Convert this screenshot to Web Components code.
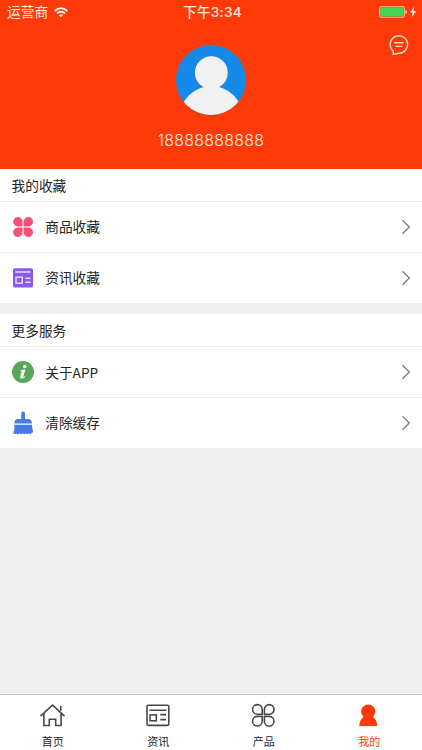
<!DOCTYPE html>
<html lang="zh-CN">
<head>
<meta charset="UTF-8">
<meta name="viewport" content="width=device-width, initial-scale=1">
<title>我的</title>
<style>
    html, body {
        height: 100%;
        margin: 0;
    }

    body {
        font-family: "Noto Sans CJK SC", Roboto, sans-serif;
        font-size: 13.7px;
        color: #262626;
        background-color: #f0f0f0;
        overflow: hidden;
    }
</style>
</head>
<body>
<profile-page></profile-page>

<script>
const icons = {
    goods: `<svg width="22" height="22" viewBox="0 0 22 22" fill="#fa5078">
        <path d="M10.5 10.5H5.8A4.7 4.7 0 1 1 10.5 5.8Z"/>
        <path d="M11.6 10.5V5.8A4.7 4.7 0 1 1 16.3 10.5Z"/>
        <path d="M10.5 11.6V16.2A4.7 4.7 0 1 1 5.8 11.6Z"/>
        <path d="M11.6 11.6H16.3A4.7 4.7 0 1 1 11.6 16.2Z"/>
    </svg>`,
    news: `<svg width="22" height="22" viewBox="0 0 22 22">
        <rect x="1" y="1.2" width="20" height="19.3" rx="1.5" fill="#8a5ae8"/>
        <path d="M3.4 5H18.6M13.4 11.3H18.5M13.4 15.3H18.5" stroke="#e8defc" stroke-width="1.4"/>
        <rect x="4" y="10.2" width="6.3" height="6" fill="none" stroke="#e8defc" stroke-width="1.4"/>
    </svg>`,
    about: `<svg width="22" height="22" viewBox="0 0 22 22">
        <circle cx="11" cy="11" r="11" fill="#55a958"/>
        <circle cx="12.7" cy="5.5" r="1.7" fill="#fff"/>
        <path d="M8.5 8.9L13.3 8.4L11.4 15.3Q11.1 16.4 13.2 15.1L13.5 15.5Q11.2 18 9.2 17.6Q7.7 17.2 8.3 15.3L9.6 10.5Q9.8 9.6 8.4 9.6Z" fill="#fff"/>
    </svg>`,
    clean: `<svg width="22" height="24" viewBox="0 0 22 24" fill="#477be3">
        <path d="M9.2 7.9V2Q9.2 .4 11.1 .4T13 2V7.9H17Q19.7 8.2 20 12.5H2.3Q2.8 8.2 5.4 7.9Z"/>
        <path d="M2.3 13.8H20Q20.3 19 21.1 20.8Q20.5 22.5 19 22.2Q18.2 24 16.4 22.2Q15.4 24 13.6 22.2Q12.4 24 10.7 22.2Q9.2 24 7.7 22.2Q6.4 24 4.8 22.7Q2.6 23.7 1.2 22.1Q3.3 18 2.3 13.8Z"/>
    </svg>`,
    home: `<svg width="26" height="26" viewBox="0.5 0 26 26" fill="none" stroke="#484848" stroke-width="1.6">
        <path d="M1 14.1L13 3.2L25 14.1M4.4 11.8V23.5H9.8V17.2H16.2V23.5H21.6V11.8M21.3 4V8.7"/>
    </svg>`,
    paper: `<svg width="26" height="26" viewBox="0 0 26 26" fill="none" stroke="#484848" stroke-width="1.6">
        <rect x="2" y="3.2" width="21.8" height="20.2" rx="1.3"/>
        <path d="M4.5 8.3H21.5M15.3 12.6H21M15.3 17.6H21"/>
        <rect x="5.1" y="12.9" width="6.2" height="5.9"/>
    </svg>`,
    product: `<svg width="26" height="26" viewBox="0.8 0 26 26" fill="none" stroke="#484848" stroke-width="1.6">
        <path d="M12 12.2H7.2A4.8 4.8 0 1 1 12 7.4Z"/>
        <path d="M14.2 12.2V7.4A4.8 4.8 0 1 1 19 12.2Z"/>
        <path d="M12 14.4V19.2A4.8 4.8 0 1 1 7.2 14.4Z"/>
        <path d="M14.2 14.4H19A4.8 4.8 0 1 1 14.2 19.2Z"/>
    </svg>`,
    mine: `<svg width="26" height="26" viewBox="1 0 26 26" fill="#fe3a08">
        <circle cx="13.2" cy="9.6" r="7.1"/>
        <path d="M9.7 14H16.7C20 15.8 22.1 19.5 22.2 24H4.2C4.3 19.5 6.4 15.8 9.7 14Z"/>
    </svg>`
};

class StatusBar extends HTMLElement {
    constructor() {
        super();
        this.shadowDOM = this.attachShadow({ mode: "open" });
    }

    connectedCallback() {
        this.shadowDOM.innerHTML = `
        <style>
            :host {
                display: grid;
                grid-template-columns: 1fr auto 1fr;
                align-items: center;
                height: 24px;
                padding: 0 5px 0 7px;
                color: #ffe9e0;
                font-size: 13.7px;
                line-height: 24px;
            }

            .carrier, .power {
                display: flex;
                align-items: center;
            }

            .carrier {
                gap: 6px;
            }

            .carrier span {
                line-height: 22px;
                padding-bottom: 2px;
            }

            .power {
                justify-content: flex-end;
            }

            .time {
                padding-left: 1px;
                font-family: Inter, "Noto Sans CJK SC", sans-serif;
                font-weight: 500;
                letter-spacing: .2px;
            }

            svg {
                display: block;
            }
        </style>
        <div class="carrier">
            <span>运营商</span>
            <svg width="14" height="11" viewBox="0 0 14 11" fill="none" stroke="#fff" stroke-width="1.7">
                <path d="M.7 4Q7-1.8 13.3 4M2.9 6.4Q7 2.7 11.1 6.4"/>
                <path d="M4.9 8.1Q7 6.4 9.1 8.1L7 10.3Z" fill="#fff" stroke="none"/>
            </svg>
        </div>
        <span class="time">下午3:34</span>
        <div class="power">
            <svg width="38" height="12" viewBox="0 0 38 12">
                <rect x=".5" y=".5" width="25" height="10.8" rx="1.8" fill="none" stroke="#ffad8c"/>
                <rect x="1.2" y="1.2" width="23.6" height="9.4" rx=".8" fill="#43d653"/>
                <path d="M26.5 4Q28 4.5 28 6T26.5 8Z" fill="#ffe0d5"/>
                <path d="M35.2 .8L31 6.5H33.7L32.8 11L37 5.2H34.3Z" fill="#fff"/>
            </svg>
        </div>`;
    }
}

class ProfileHeader extends HTMLElement {
    constructor() {
        super();
        this.shadowDOM = this.attachShadow({ mode: "open" });
    }

    connectedCallback() {
        this.shadowDOM.innerHTML = `
        <style>
            :host {
                display: block;
                height: 168.7px;
                background-color: #fe3a08;
                color: #ffe9e0;
            }

            .profile {
                display: grid;
                grid-template-columns: 1fr 70px 1fr;
                padding: 10px 12px 0;
            }

            .avatar {
                grid-column: 2;
                margin-top: 11px;
            }

            .message {
                justify-self: end;
            }

            svg {
                display: block;
            }

            .phone {
                margin-top: 14px;
                text-align: center;
                font-family: Inter, sans-serif;
                font-size: 15.8px;
                font-weight: 300;
                letter-spacing: .35px;
                line-height: 23px;
            }
        </style>
        <status-bar></status-bar>
        <div class="profile">
            <svg class="avatar" width="70" height="70" viewBox="0 0 70 70">
                <clipPath id="round"><circle cx="35" cy="35" r="35"/></clipPath>
                <g clip-path="url(#round)">
                    <rect width="70" height="70" fill="#168ae8"/>
                    <g fill="#f1f1f1">
                        <circle cx="35.3" cy="27.7" r="16.4"/>
                        <circle cx="35.3" cy="72.5" r="31.5"/>
                    </g>
                </g>
            </svg>
            <svg class="message" width="22" height="22" viewBox="0 0 22 22" fill="none" stroke="#ffe4da" stroke-width="1.4" stroke-linejoin="round">
                <path d="M5.2 17.1A8.7 8.7 0 1 1 10.8 19.2Q8.5 20 5.2 20.4Z"/>
                <path d="M6.3 8.8H15.5M7.5 12.4H14.3"/>
            </svg>
        </div>
        <div class="phone"><slot></slot></div>`;
    }
}

class MenuGroup extends HTMLElement {
    constructor() {
        super();
        this.shadowDOM = this.attachShadow({ mode: "open" });
    }

    connectedCallback() {
        this.shadowDOM.innerHTML = `
        <style>
            :host {
                display: block;
                background-color: #fff;
            }

            .title {
                box-sizing: border-box;
                height: 33.5px;
                padding-left: 11.5px;
                line-height: 32px;
                border-bottom: 1px solid #ededed;
            }
        </style>
        <div class="title">${this.getAttribute("heading")}</div>
        <slot></slot>`;
    }
}

class MenuItem extends HTMLElement {
    constructor() {
        super();
        this.shadowDOM = this.attachShadow({ mode: "open" });
    }

    connectedCallback() {
        this.shadowDOM.innerHTML = `
        <style>
            :host {
                display: flex;
                align-items: center;
                box-sizing: border-box;
                height: 50.6px;
                padding: 0 11px 0 11.6px;
                border-bottom: 1px solid #ededed;
            }

            :host(:last-child) {
                border-bottom-color: transparent;
            }

            .label {
                flex: 1;
                margin-left: 11.6px;
                padding-bottom: 1px;
                line-height: 20px;
            }

            svg {
                display: block;
            }
        </style>
        ${icons[this.getAttribute("icon")]}
        <span class="label"><slot></slot></span>
        <svg width="10" height="16" viewBox="0 0 10 16" fill="none" stroke="#858585" stroke-width="1.5">
            <path d="M1.5 1.3L8.3 8L1.5 14.7"/>
        </svg>`;
    }
}

class TabItem extends HTMLElement {
    constructor() {
        super();
        this.shadowDOM = this.attachShadow({ mode: "open" });
    }

    connectedCallback() {
        this.shadowDOM.innerHTML = `
        <style>
            :host {
                display: flex;
                flex: 1;
                flex-direction: column;
                align-items: center;
                padding-top: 7px;
                font-size: 11px;
                line-height: 16px;
            }

            :host([active]) {
                color: #fe3a08;
            }

            svg {
                display: block;
                margin-bottom: 5px;
            }
        </style>
        ${icons[this.getAttribute("icon")]}
        <slot></slot>`;
    }
}

class TabBar extends HTMLElement {
    constructor() {
        super();
        this.shadowDOM = this.attachShadow({ mode: "open" });
    }

    connectedCallback() {
        this.shadowDOM.innerHTML = `
        <style>
            :host {
                display: flex;
                box-sizing: border-box;
                height: 56px;
                background-color: #fff;
                border-top: 1px solid #c4c4c4;
            }
        </style>
        <slot></slot>`;
    }
}

class ProfilePage extends HTMLElement {
    constructor() {
        super();
        this.shadowDOM = this.attachShadow({ mode: "open" });
    }

    connectedCallback() {
        this.shadowDOM.innerHTML = `
        <style>
            :host {
                display: flex;
                flex-direction: column;
                height: 100%;
            }

            menu-group + menu-group {
                margin-top: 10.4px;
            }

            tab-bar {
                margin-top: auto;
            }
        </style>
        <profile-header>18888888888</profile-header>
        <menu-group heading="我的收藏">
            <menu-item icon="goods">商品收藏</menu-item>
            <menu-item icon="news">资讯收藏</menu-item>
        </menu-group>
        <menu-group heading="更多服务">
            <menu-item icon="about">关于APP</menu-item>
            <menu-item icon="clean">清除缓存</menu-item>
        </menu-group>
        <tab-bar>
            <tab-item icon="home">首页</tab-item>
            <tab-item icon="paper">资讯</tab-item>
            <tab-item icon="product">产品</tab-item>
            <tab-item icon="mine" active>我的</tab-item>
        </tab-bar>`;
    }
}

customElements.define("status-bar", StatusBar);
customElements.define("profile-header", ProfileHeader);
customElements.define("menu-group", MenuGroup);
customElements.define("menu-item", MenuItem);
customElements.define("tab-item", TabItem);
customElements.define("tab-bar", TabBar);
customElements.define("profile-page", ProfilePage);
</script>
</body>
</html>
